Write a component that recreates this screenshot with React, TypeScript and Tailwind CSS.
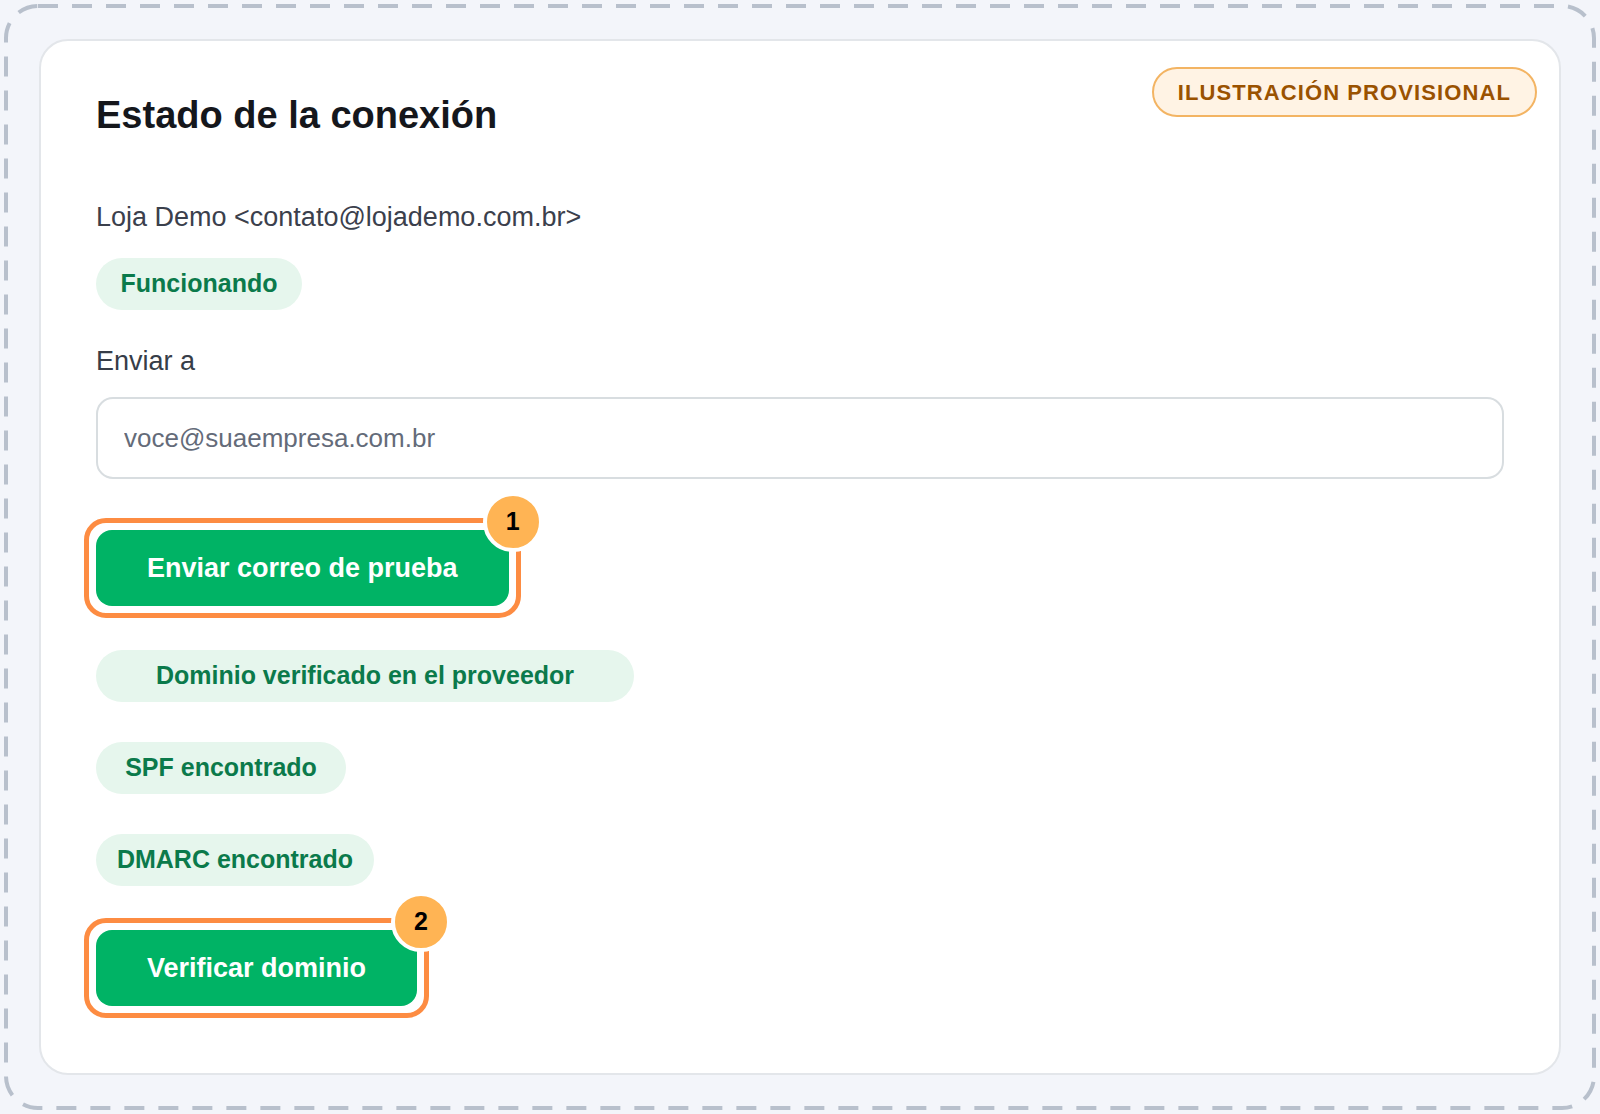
import { useState, type ReactNode } from 'react'

const checks = [
  { label: 'Dominio verificado en el proveedor', width: 'w-[538px]' },
  { label: 'SPF encontrado', width: 'w-[250px]' },
  { label: 'DMARC encontrado', width: 'w-[278px]' },
]

function StatusPill({ width, children }: { width: string, children: ReactNode }) {
  return (
    <span className={`flex h-[52px] max-w-full items-center justify-center rounded-full bg-[#e6f6ed] text-[25px] font-bold text-[#0b7a4b] ${width}`}>
      {children}
    </span>
  )
}

// Button with an orange outline and a numbered marker on its corner
function StepButton({ step, children }: { step: number, children: ReactNode }) {
  return (
    <div className="relative -ml-3 w-fit rounded-[22px] border-5 border-[#fd8c42] p-[7px]">
      <button
        type="button"
        className="flex h-[76px] items-center rounded-2xl bg-[#00b365] px-[51px] text-[27px] font-bold text-white"
      >
        {children}
      </button>
      <span className="absolute -top-[31px] -right-[27px] flex size-[60px] items-center justify-center rounded-full border-4 border-white bg-[#ffb454] text-[25px] font-bold text-black">
        {step}
      </span>
    </div>
  )
}

export default function App() {
  const [email, setEmail] = useState('')

  return (
    <div className="relative flex min-h-screen bg-[#f3f5fa] p-[39px] font-['Liberation_Sans',Arial,sans-serif]">
      <svg className="pointer-events-none absolute inset-0 h-full w-full" aria-hidden="true">
        <rect
          x="6"
          y="6"
          rx="32"
          className="h-[calc(100%-12px)] w-[calc(100%-12px)] fill-none stroke-[#b8c0cc]"
          strokeWidth="4"
          strokeDasharray="20 14"
        />
      </svg>

      <main className="relative flex-1 rounded-[29px] border-2 border-[#e3e6ea] bg-white px-[55px] py-[52px]">
        <span className="absolute top-[26px] right-[22px] flex h-[50px] items-center rounded-full border-2 border-[#f3b463] bg-[#fff3e4] px-6 text-[22px] font-bold tracking-wider text-[#9a5200]">
          ILUSTRACIÓN PROVISIONAL
        </span>

        <h1 className="text-[38px] leading-[44px] font-bold text-[#15171c]">Estado de la conexión</h1>

        <p className="mt-16 mb-[25px] text-[27px] leading-8 text-[#3b404c]">
          Loja Demo &lt;contato@lojademo.com.br&gt;
        </p>
        <StatusPill width="w-[206px]">Funcionando</StatusPill>

        <form className="mt-[35px]" onSubmit={(e) => e.preventDefault()}>
          <label htmlFor="recipient" className="block text-[27px] leading-8 font-medium text-[#363d48]">
            Enviar a
          </label>
          <input
            id="recipient"
            type="email"
            value={email}
            onChange={(e) => setEmail(e.target.value)}
            placeholder="voce@suaempresa.com.br"
            className="mt-5 mb-[39px] block h-[82px] w-full rounded-[17px] border-2 border-[#d8dde0] bg-white px-[26px] text-[26px] text-[#363d48] placeholder:text-[#646b79]"
          />
          <StepButton step={1}>Enviar correo de prueba</StepButton>
        </form>

        <ul className="my-8 flex flex-col gap-10">
          {checks.map((check) => (
            <li key={check.label}>
              <StatusPill width={check.width}>{check.label}</StatusPill>
            </li>
          ))}
        </ul>

        <StepButton step={2}>Verificar dominio</StepButton>
      </main>
    </div>
  )
}
